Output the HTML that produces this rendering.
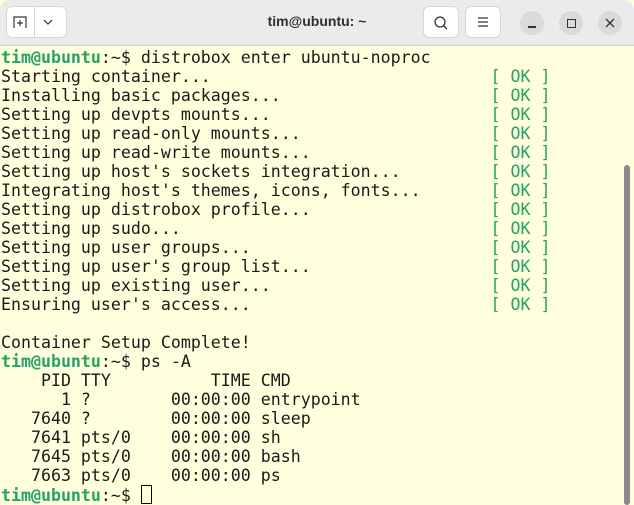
<!DOCTYPE html>
<html><head><meta charset="utf-8"><style>
html,body{margin:0;padding:0;width:634px;height:505px;overflow:hidden;background:#ffffdd;}
.tb{position:absolute;left:0;top:0;width:634px;height:45px;background:#ebebeb;border-bottom:1px solid #d0d0d0;border-radius:10px 10px 0 0;}
.title{position:absolute;left:0;right:0;top:13px;text-align:center;font:bold 14px "Liberation Sans",sans-serif;color:#2e2e2e;}
.btn{position:absolute;top:6px;height:32px;background:#fff;border:1px solid #d6d6d6;border-radius:6px;box-sizing:border-box;}
.circ{position:absolute;top:11px;width:24px;height:24px;border-radius:50%;background:#dadada;}
.term{position:absolute;left:1px;top:48px;font-family:"DejaVu Sans Mono","Liberation Mono",monospace;font-size:16.6px;line-height:19px;color:#1a1a1a;white-space:pre;}
.g{color:#26a269;font-weight:bold}
.ok{color:#26a269}
.cur{display:inline-block;width:9px;height:17px;border:1px solid #000;vertical-align:-3px;}
.sb{position:absolute;left:624px;top:165px;width:6px;height:340px;background:#8a8a8a;border-radius:3px;}
</style></head><body>
<div class="tb">
 <div class="btn" style="left:6px;width:61px;"></div>
 <div style="position:absolute;left:34px;top:7px;width:1px;height:30px;background:#d6d6d6"></div>
 <svg style="position:absolute;left:13px;top:15px" width="14" height="14" viewBox="0 0 14 14" fill="none" stroke="#333" stroke-width="1.2"><path d="M1 13V2h12v11M7 5v6M4 8h6"/></svg>
 <svg style="position:absolute;left:43px;top:19px" width="10" height="6" viewBox="0 0 10 6" fill="none" stroke="#333" stroke-width="1.2"><path d="M1 1l4 4 4-4"/></svg>
 <div class="title">tim@ubuntu: ~</div>
 <div class="btn" style="left:423px;width:36px;"></div>
 <svg style="position:absolute;left:433px;top:15px" width="16" height="16" viewBox="0 0 16 16" fill="none" stroke="#333" stroke-width="1.3"><circle cx="7" cy="7" r="5"/><path d="M10.5 10.5l3.5 3.5"/></svg>
 <div class="btn" style="left:465px;width:36px;"></div>
 <svg style="position:absolute;left:477px;top:16px" width="12" height="12" viewBox="0 0 12 12" stroke="#333" stroke-width="1.2"><path d="M1 2h10M1 6h10M1 10h10"/></svg>
 <div class="circ" style="left:520px"></div>
 <div style="position:absolute;left:528px;top:26px;width:8px;height:1.5px;background:#333"></div>
 <div class="circ" style="left:559px"></div>
 <div style="position:absolute;left:567px;top:19px;width:7px;height:7px;border:1.3px solid #333"></div>
 <div class="circ" style="left:598px"></div>
 <svg style="position:absolute;left:605px;top:18px" width="10" height="10" viewBox="0 0 10 10" stroke="#333" stroke-width="1.3"><path d="M1 1l8 8M9 1l-8 8"/></svg>
</div>
<div class="term"><span class="g">tim@ubuntu</span>:~$ distrobox enter ubuntu-noproc
Starting container...                            <span class="ok">[ OK ]</span>
Installing basic packages...                     <span class="ok">[ OK ]</span>
Setting up devpts mounts...                      <span class="ok">[ OK ]</span>
Setting up read-only mounts...                   <span class="ok">[ OK ]</span>
Setting up read-write mounts...                  <span class="ok">[ OK ]</span>
Setting up host's sockets integration...         <span class="ok">[ OK ]</span>
Integrating host's themes, icons, fonts...       <span class="ok">[ OK ]</span>
Setting up distrobox profile...                  <span class="ok">[ OK ]</span>
Setting up sudo...                               <span class="ok">[ OK ]</span>
Setting up user groups...                        <span class="ok">[ OK ]</span>
Setting up user's group list...                  <span class="ok">[ OK ]</span>
Setting up existing user...                      <span class="ok">[ OK ]</span>
Ensuring user's access...                        <span class="ok">[ OK ]</span>

Container Setup Complete!
<span class="g">tim@ubuntu</span>:~$ ps -A
    PID TTY          TIME CMD
      1 ?        00:00:00 entrypoint
   7640 ?        00:00:00 sleep
   7641 pts/0    00:00:00 sh
   7645 pts/0    00:00:00 bash
   7663 pts/0    00:00:00 ps
<span class="g">tim@ubuntu</span>:~$ <span class="cur"></span></div>
<div class="sb"></div>
</body></html>
